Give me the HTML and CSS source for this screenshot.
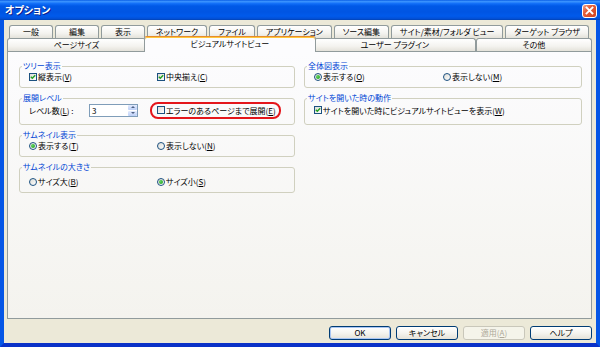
FILE: index.html
```html
<!DOCTYPE html>
<html lang="ja">
<head>
    <meta charset="UTF-8">
    <meta name="viewport" content="width=device-width, initial-scale=1.0">
    <title>オプション</title>
    <link rel="stylesheet" href="styles.css">
</head>
<body>
    <div class="window">
        <div class="titlebar">
            <span class="title">オプション</span>
            <span class="close">
                <svg width="13" height="12" viewBox="0 0 13 12"><path d="M3.5 2.5 L9.5 8.5 M9.5 2.5 L3.5 8.5" stroke="#fff" stroke-width="1.8" stroke-linecap="square"/></svg>
            </span>
        </div>
        <div class="frame">
            <div class="tabs">
                <div class="tab-row back">
                    <div class="tab">一般</div>
                    <div class="tab">編集</div>
                    <div class="tab">表示</div>
                    <div class="tab">ネットワーク</div>
                    <div class="tab">ファイル</div>
                    <div class="tab">アプリケーション</div>
                    <div class="tab">ソース編集</div>
                    <div class="tab">サイト/素材/フォルダ ビュー</div>
                    <div class="tab">ターゲット ブラウザ</div>
                </div>
                <div class="tab-row front">
                    <div class="tab">ページサイズ</div>
                    <div class="tab selected">ビジュアルサイトビュー</div>
                    <div class="tab">ユーザー プラグイン</div>
                    <div class="tab">その他</div>
                </div>
            </div>
            <div class="panel">
                <div class="column">
                    <fieldset class="group">
                        <legend>ツリー表示</legend>
                        <div class="pair">
                            <label class="check"><span class="box"><svg width="6" height="6" viewBox="0 0 6 6"><path d="M0.8 2.8 L2.3 4.3 L5.2 1.2" fill="none" stroke="#21a121" stroke-width="1.4"/></svg></span>縦表示(<u>V</u>)</label>
                            <label class="check"><span class="box"><svg width="6" height="6" viewBox="0 0 6 6"><path d="M0.8 2.8 L2.3 4.3 L5.2 1.2" fill="none" stroke="#21a121" stroke-width="1.4"/></svg></span>中央揃え(<u>C</u>)</label>
                        </div>
                    </fieldset>
                    <fieldset class="group">
                        <legend>展開レベル</legend>
                        <div class="pair level">
                            <div class="level-field">
                                <span class="level-label">レベル数(<u>L</u>) :</span>
                                <div class="spin">
                                    <span class="spin-value">3</span>
                                    <span class="spin-btns"><span class="up"></span><span class="down"></span></span>
                                </div>
                            </div>
                            <label class="check marked"><span class="box"></span>エラーのあるページまで展開(<u>E</u>)</label>
                        </div>
                    </fieldset>
                    <fieldset class="group">
                        <legend>サムネイル表示</legend>
                        <div class="pair">
                            <label class="check"><span class="radio on"></span>表示する(<u>T</u>)</label>
                            <label class="check"><span class="radio"></span>表示しない(<u>N</u>)</label>
                        </div>
                    </fieldset>
                    <fieldset class="group">
                        <legend>サムネイルの大きさ</legend>
                        <div class="pair loose">
                            <label class="check"><span class="radio"></span>サイズ大(<u>B</u>)</label>
                            <label class="check"><span class="radio on"></span>サイズ小(<u>S</u>)</label>
                        </div>
                    </fieldset>
                </div>
                <div class="column">
                    <fieldset class="group">
                        <legend>全体図表示</legend>
                        <div class="pair">
                            <label class="check"><span class="radio on"></span>表示する(<u>O</u>)</label>
                            <label class="check"><span class="radio"></span>表示しない(<u>M</u>)</label>
                        </div>
                    </fieldset>
                    <fieldset class="group">
                        <legend>サイトを開いた時の動作</legend>
                        <div class="pair level">
                            <label class="check"><span class="box"><svg width="6" height="6" viewBox="0 0 6 6"><path d="M0.8 2.8 L2.3 4.3 L5.2 1.2" fill="none" stroke="#21a121" stroke-width="1.4"/></svg></span>サイトを開いた時にビジュアルサイトビューを表示(<u>W</u>)</label>
                        </div>
                    </fieldset>
                </div>
            </div>
            <div class="buttons">
                <button class="btn default">OK</button>
                <button class="btn">キャンセル</button>
                <button class="btn" disabled>適用(<u>A</u>)</button>
                <button class="btn">ヘルプ</button>
            </div>
        </div>
    </div>
</body>
</html>
```

FILE: styles.css
```css
* {
    box-sizing: border-box;
}
body {
    margin: 0;
    font-family: "Noto Sans CJK JP", "Noto Sans", sans-serif;
    font-size: 8px;
    line-height: 11px;
    font-feature-settings: "palt";
    color: #000;
    background: #ece9d8;
}
u {
    text-decoration: underline;
    text-underline-offset: 1px;
}
.window {
    width: 600px;
    height: 347px;
    display: flex;
    flex-direction: column;
}
.titlebar {
    flex: none;
    height: 20px;
    display: flex;
    align-items: flex-start;
    justify-content: space-between;
    padding: 0 3px 0 5px;
    background: linear-gradient(#0a5fe6 0%, #3b94ff 8%, #116ef8 18%, #0059e7 30%, #0055e3 60%, #005aeb 80%, #0251d9 92%, #0242b4 100%);
}
.title {
    margin-top: 4px;
    color: #fff;
    font-size: 10px;
    font-weight: bold;
    line-height: 12px;
    text-shadow: 1px 1px 0 #0a1e8c;
}
.close {
    margin-top: 4px;
    width: 15px;
    height: 14px;
    border: 1px solid #fff;
    border-radius: 3px;
    background: linear-gradient(135deg, #f4a68c 0%, #e4603c 35%, #d2421d 100%);
    display: flex;
    align-items: center;
    justify-content: center;
}
.frame {
    flex: 1;
    display: flex;
    flex-direction: column;
    padding: 5px 4px 0 3px;
    background: #ece9d8;
    border: 4px solid #0556e6;
    border-top: 0;
    border-bottom-color: #0a31c8;
}
.tabs {
    flex: none;
}
.tab-row {
    display: flex;
    height: 13px;
}
.tab-row.back {
    margin: 0 3px 0 2px;
    gap: 2px;
}
.tab-row.front {
    align-items: flex-end;
    position: relative;
    z-index: 1;
}
.tab {
    flex: 1 1 auto;
    min-width: 44px;
    height: 13px;
    padding: 0 5px;
    border: 1px solid #919b9c;
    border-bottom: 0;
    border-radius: 3px 3px 0 0;
    background: linear-gradient(#fff, #f4f3ef 60%, #e4e2da);
    text-align: center;
    line-height: 12px;
    white-space: nowrap;
}
.tab.selected {
    height: 16px;
    margin: 0 -2px -1px;
    border-top: 1px solid #e68b2c;
    box-shadow: inset 0 1px 0 #ffc83c;
    background: #fcfcfe;
    line-height: 14px;
    position: relative;
    z-index: 1;
}
.panel {
    flex: none;
    height: 268px;
    border: 1px solid #919b9c;
    background: linear-gradient(#fcfcfe, #f4f3ee);
    padding: 9px 9px 0 11px;
    display: grid;
    grid-template-columns: 276px 278px;
    column-gap: 9px;
    align-items: start;
}
.column {
    display: flex;
    flex-direction: column;
    gap: 5px;
}
.group {
    margin: 0;
    padding: 0 0 5px;
    border: 1px solid #d0d0bf;
    border-radius: 3px;
    min-width: 0;
}
.group legend {
    margin-left: 2px;
    padding: 0 1px;
    color: #0046d5;
    line-height: 10px;
}
.pair {
    display: grid;
    grid-template-columns: 1fr 1fr;
    align-items: center;
    height: 11px;
    padding: 0 9px;
}
.pair.level {
    height: 14px;
    margin-bottom: 2px;
}
.pair.loose {
    height: 15px;
    padding-top: 4px;
}
.check {
    display: inline-flex;
    align-items: center;
    justify-self: start;
    white-space: nowrap;
}
.check.marked {
    position: relative;
}
.check.marked::before {
    content: "";
    position: absolute;
    inset: -3px -5px -3px -7px;
    border: 2px solid #e4161b;
    border-radius: 8px;
}
.box,
.radio {
    flex: none;
    width: 8px;
    height: 8px;
    margin-right: 1px;
    border: 1px solid #1c5180;
    background: linear-gradient(135deg, #dcdcd6, #fff);
    display: flex;
    align-items: center;
    justify-content: center;
}
.radio {
    border-radius: 50%;
}
.radio.on::after {
    content: "";
    width: 4px;
    height: 4px;
    border-radius: 50%;
    background: radial-gradient(circle at 35% 35%, #5fd35f, #1a9a1a);
}
.level-field {
    display: flex;
    align-items: center;
}
.level-label {
    width: 60px;
}
.spin {
    display: flex;
    width: 49px;
    height: 13px;
    border: 1px solid #7f9db9;
    background: #fff;
}
.spin-value {
    flex: 1;
    padding-left: 2px;
    line-height: 11px;
}
.spin-btns {
    display: flex;
    flex-direction: column;
    gap: 1px;
    width: 9px;
}
.spin-btns span {
    flex: 1;
    display: flex;
    align-items: center;
    justify-content: center;
    border-radius: 1px;
    background: linear-gradient(#e3ebfd, #bccff7);
}
.spin-btns .up::after,
.spin-btns .down::after {
    content: "";
    border-left: 2px solid transparent;
    border-right: 2px solid transparent;
}
.spin-btns .up::after {
    border-bottom: 2px solid #4d6185;
}
.spin-btns .down::after {
    border-top: 2px solid #4d6185;
}
.buttons {
    display: flex;
    justify-content: flex-end;
    gap: 5px;
    margin-top: 7px;
}
.btn {
    width: 62px;
    height: 14px;
    padding: 0;
    border: 1px solid #003c74;
    border-radius: 3px;
    background: linear-gradient(#fff, #f5f4ef 50%, #e5e2d8);
    font: inherit;
    line-height: 12px;
    color: #000;
}
.btn.default {
    box-shadow: inset 0 0 0 1px #a9c6f4;
}
.btn:disabled {
    border-color: #c9c7ba;
    background: #f5f4ea;
    color: #aca899;
}
```
